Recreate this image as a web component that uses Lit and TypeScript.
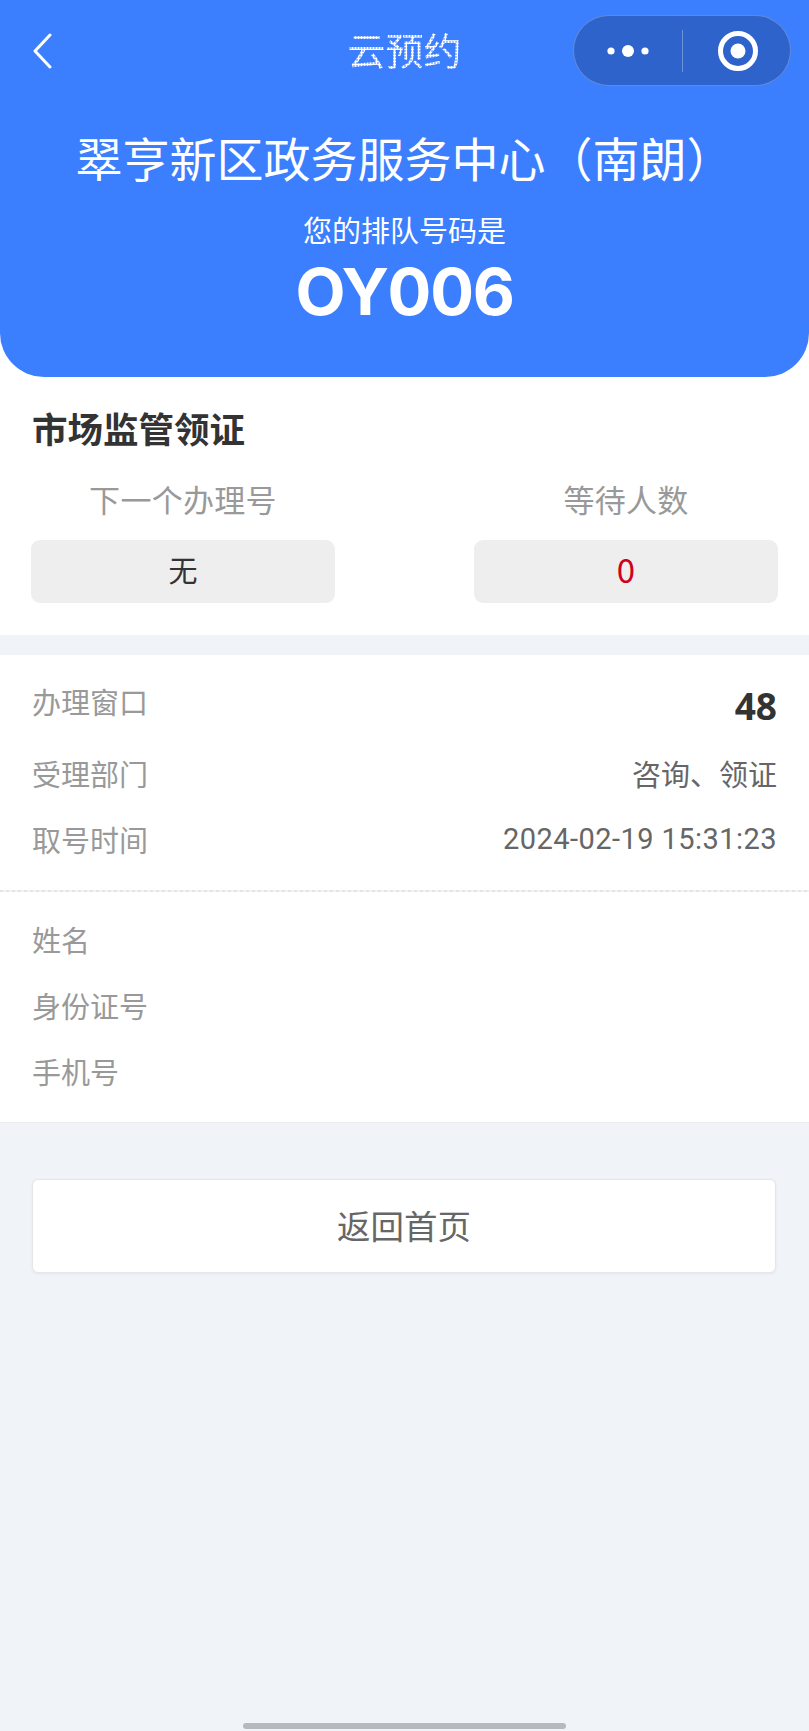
import { LitElement, html, css } from "lit";
import { customElement } from "lit/decorators.js";

@customElement("app-root")
export class AppRoot extends LitElement {
  static styles = css`
    :host {
      display: block;
      position: relative;
      width: 809px;
      height: 1731px;
      overflow: hidden;
      background: #f0f4f8;
      font-family: "Noto Sans CJK SC", "Noto Sans", sans-serif;
      color: #333;
    }
    .hero-wrap { background: #fff; }
    .hero {
      height: 377px;
      box-sizing: border-box;
      background: #3b7efe;
      border-radius: 0 0 44px 44px;
      color: #fff;
      text-align: center;
    }
    .nav {
      display: flex;
      align-items: center;
      justify-content: space-between;
      height: 71px;
      padding: 15px 18px 0 32px;
      position: relative;
    }
    .back { width: 22px; height: 36px; display: block; }
    .nav-title {
      position: absolute;
      left: 0;
      right: 0;
      top: 24px;
      font-size: 38px;
      line-height: 50px;
      font-weight: 400;
      background:
        radial-gradient(circle, #fff 50%, rgba(255, 255, 255, 0) 70%) 0 0 / 3px 3px,
        linear-gradient(rgba(255, 255, 255, 0.45), rgba(255, 255, 255, 0.45));
      -webkit-background-clip: text;
      background-clip: text;
      color: transparent;
    }
    .capsule {
      width: 218px;
      height: 71px;
      box-sizing: border-box;
      display: flex;
      align-items: center;
      background: #2e63cb;
      border: 1px solid rgba(255, 255, 255, 0.25);
      border-radius: 36px;
      position: relative;
    }
    .cap-half { flex: 1; display: flex; align-items: center; justify-content: center; }
    .cap-half.right svg { margin-left: 3px; }
    .cap-div { width: 1px; height: 42px; background: rgba(255, 255, 255, 0.3); }
    .hero-title { margin-top: 41px; font-size: 47px; line-height: 60px; white-space: nowrap; }
    .hero-sub { margin-top: 22px; font-size: 29px; line-height: 40px; }
    .hero-code {
      margin-top: 3px;
      font-family: "Inter", sans-serif;
      font-size: 65px;
      line-height: 80px;
      font-weight: 700;
      letter-spacing: -1.3px;
    }
    .queue { background: #fff; padding: 31px 31px 32px; }
    .queue-head { font-size: 35.5px; line-height: 40px; font-weight: 700; color: #333; padding-left: 1px; }
    .stats { display: grid; grid-template-columns: 1fr 1fr; column-gap: 139px; margin-top: 31px; }
    .stat { text-align: center; }
    .stat-label { font-size: 31px; line-height: 40px; color: #999; letter-spacing: 0.3px; }
    .stat-box {
      margin-top: 21px;
      height: 63px;
      line-height: 59px;
      background: #eeeeee;
      border-radius: 9px;
      font-size: 29px;
      color: #333;
    }
    .red { color: #d0021b; font-size: 33px; }
    .info { background: #fff; margin-top: 20px; padding: 13px 32px 16px; }
    .row {
      display: flex;
      align-items: center;
      justify-content: space-between;
      height: 66px;
      box-sizing: border-box;
      padding-bottom: 4px;
      font-size: 29px;
      color: #999;
    }
    .row.first { height: 70px; margin-bottom: 4px; }
    .row .val { color: #666; font-size: 29px; }
    .row .num { font-family: "Open Sans", sans-serif; font-size: 37px; font-weight: 700; color: #333; padding-top: 8px; }
    .row .time { font-family: "Roboto", sans-serif; letter-spacing: 0.45px; }
    .dash { height: 2px; background: repeating-linear-gradient(90deg, #e4e4e4 0 3px, transparent 3px 6px); }
    .person {
      background: #fff;
      padding: 16px 32px 16px;
      border-bottom: 1px solid #e9ecef;
    }
    .home {
      margin: 56px 33px 0 32px;
      height: 94px;
      box-sizing: border-box;
      padding-bottom: 4px;
      display: flex;
      align-items: center;
      justify-content: center;
      background: #fff;
      border: 1px solid #e4e6e9;
      border-radius: 6px;
      box-shadow: 0 1px 3px rgba(0, 0, 0, 0.06);
      font-size: 33.5px;
      color: #666;
    }
    .home-bar {
      position: absolute;
      left: 243px;
      top: 1723px;
      width: 323px;
      height: 6px;
      border-radius: 3px;
      background: #b6babd;
    }
  `;

  render() {
    return html`
      <div class="hero-wrap">
        <div class="hero">
          <div class="nav">
            <svg class="back" viewBox="0 0 22 36" fill="none" stroke="#fff" stroke-width="3" stroke-linecap="round" stroke-linejoin="round">
              <path d="M18 2 L3 18 L18 34" />
            </svg>
            <div class="nav-title">云预约</div>
            <div class="capsule">
              <div class="cap-half">
                <svg width="44" height="14" viewBox="0 0 44 14" fill="#fff">
                  <circle cx="5" cy="7" r="3.6" /><circle cx="22" cy="7" r="6" /><circle cx="39" cy="7" r="3.6" />
                </svg>
              </div>
              <div class="cap-div"></div>
              <div class="cap-half right">
                <svg width="42" height="42" viewBox="0 0 42 42">
                  <circle cx="21" cy="21" r="17.5" fill="none" stroke="#fff" stroke-width="5" />
                  <circle cx="21" cy="21" r="7.5" fill="#fff" />
                </svg>
              </div>
            </div>
          </div>
          <div class="hero-title">翠亨新区政务服务中心（南朗）</div>
          <div class="hero-sub">您的排队号码是</div>
          <div class="hero-code">OY006</div>
        </div>
      </div>

      <div class="queue">
        <div class="queue-head">市场监管领证</div>
        <div class="stats">
          <div class="stat">
            <div class="stat-label">下一个办理号</div>
            <div class="stat-box">无</div>
          </div>
          <div class="stat">
            <div class="stat-label">等待人数</div>
            <div class="stat-box red">0</div>
          </div>
        </div>
      </div>

      <div class="info">
        <div class="row first"><span>办理窗口</span><span class="num">48</span></div>
        <div class="row"><span>受理部门</span><span class="val">咨询、领证</span></div>
        <div class="row"><span>取号时间</span><span class="val time">2024-02-19 15:31:23</span></div>
      </div>
      <div class="dash"></div>
      <div class="person">
        <div class="row"><span>姓名</span></div>
        <div class="row"><span>身份证号</span></div>
        <div class="row"><span>手机号</span></div>
      </div>

      <div class="home">返回首页</div>
      <div class="home-bar"></div>
    `;
  }
}
